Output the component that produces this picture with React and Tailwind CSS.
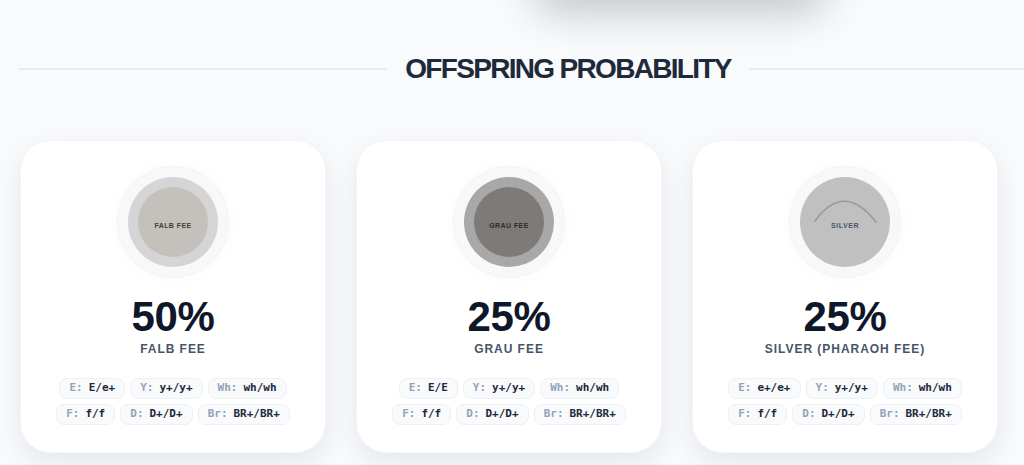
import React from "react";

const results = [
  {
    pct: "50%",
    name: "Falb Fee",
    swatch: "falb",
    genes: [
      [["E", "E/e+"], ["Y", "y+/y+"], ["Wh", "wh/wh"]],
      [["F", "f/f"], ["D", "D+/D+"], ["Br", "BR+/BR+"]],
    ],
  },
  {
    pct: "25%",
    name: "Grau Fee",
    swatch: "grau",
    genes: [
      [["E", "E/E"], ["Y", "y+/y+"], ["Wh", "wh/wh"]],
      [["F", "f/f"], ["D", "D+/D+"], ["Br", "BR+/BR+"]],
    ],
  },
  {
    pct: "25%",
    name: "Silver (Pharaoh Fee)",
    swatch: "silver",
    genes: [
      [["E", "e+/e+"], ["Y", "y+/y+"], ["Wh", "wh/wh"]],
      [["F", "f/f"], ["D", "D+/D+"], ["Br", "BR+/BR+"]],
    ],
  },
];

function Swatch({ kind }) {
  const halo =
    "w-[90px] h-[90px] rounded-full flex items-center justify-center shadow-[0_0_0_10px_#f6f8fa,0_0_0_11px_#f1f4f7,0_0_18px_6px_rgba(15,23,42,0.05)]";

  if (kind === "silver") {
    return (
      <div className={`${halo} bg-[#c0c0c0] relative`}>
        <svg className="absolute inset-0" width="90" height="90" viewBox="0 0 90 90">
          <path d="M15 44 Q44 4 76 45" fill="none" stroke="#8e9c9b" strokeWidth="1.6" strokeLinecap="round" />
        </svg>
        <span className="relative mt-2 text-[7px] font-bold tracking-[0.08em] text-[#475569]">SILVER</span>
      </div>
    );
  }

  const outer = kind === "falb" ? "bg-[#d5d5d5]" : "bg-[#a8a8a8]";
  const inner = kind === "falb" ? "bg-[#c4c0bc]" : "bg-[#7e7a77]";
  const ink = kind === "falb" ? "text-[#4a3a30]" : "text-[#33282a]";
  return (
    <div className={`${halo} ${outer}`}>
      <div className={`w-[70px] h-[70px] rounded-full ${inner} flex items-center justify-center`}>
        <span className={`mt-2 text-[7px] font-bold tracking-[0.06em] ${ink}`}>
          {kind === "falb" ? "FALB FEE" : "GRAU FEE"}
        </span>
      </div>
    </div>
  );
}

function Chip({ label, value }) {
  return (
    <span className="h-[21px] px-[9px] flex items-center rounded-lg bg-[#f8fafc] border border-[#edf1f6] text-[11px] font-bold font-['DejaVu_Sans_Mono',monospace]">
      <span className="text-[#94a3b8] mr-[6px]">{label}:</span>
      <span className="text-[#1e293b]">{value}</span>
    </span>
  );
}

export default function App() {
  return (
    <div className="h-[465px] overflow-hidden bg-[#f8fafc] font-['Liberation_Sans',Arial,sans-serif]">
      <div className="h-0 flex">
        <div className="ml-[530px] -mt-[70px] w-[300px] h-[62px] rounded-[40px] bg-white shadow-[0_22px_40px_rgba(0,0,0,0.2)]" />
      </div>

      <div className="pt-[52px] ml-[19px] w-[1098px] flex items-center gap-[18px]">
        <div className="flex-1 h-[2px] bg-[#e8ecf2]" />
        <h2 className="text-[28px] leading-[34px] font-bold tracking-[-0.06em] text-[#1e293b]">
          OFFSPRING PROBABILITY
        </h2>
        <div className="flex-1 h-[2px] bg-[#e8ecf2]" />
      </div>

      <div className="mt-[54px] ml-[20px] flex gap-[30px]">
        {results.map((r, i) => (
          <div
            key={i}
            className="w-[306px] h-[313px] shrink-0 rounded-[30px] bg-white border border-[#f1f4f8] shadow-[0_10px_28px_rgba(15,23,42,0.08)] flex flex-col items-center pt-[36px]"
          >
            <Swatch kind={r.swatch} />
            <div className="mt-[29px] text-[42px] leading-[42px] font-bold tracking-[-0.01em] text-[#0f172a]">
              {r.pct}
            </div>
            <div className="mt-[3px] text-[12px] leading-[16px] font-bold tracking-[0.08em] uppercase text-[#475569]">
              {r.name}
            </div>
            <div className="mt-[21px] flex flex-col items-center gap-[5px]">
              {r.genes.map((row, j) => (
                <div key={j} className="flex gap-[5px]">
                  {row.map(([l, v]) => (
                    <Chip key={l} label={l} value={v} />
                  ))}
                </div>
              ))}
            </div>
          </div>
        ))}
      </div>
    </div>
  );
}
